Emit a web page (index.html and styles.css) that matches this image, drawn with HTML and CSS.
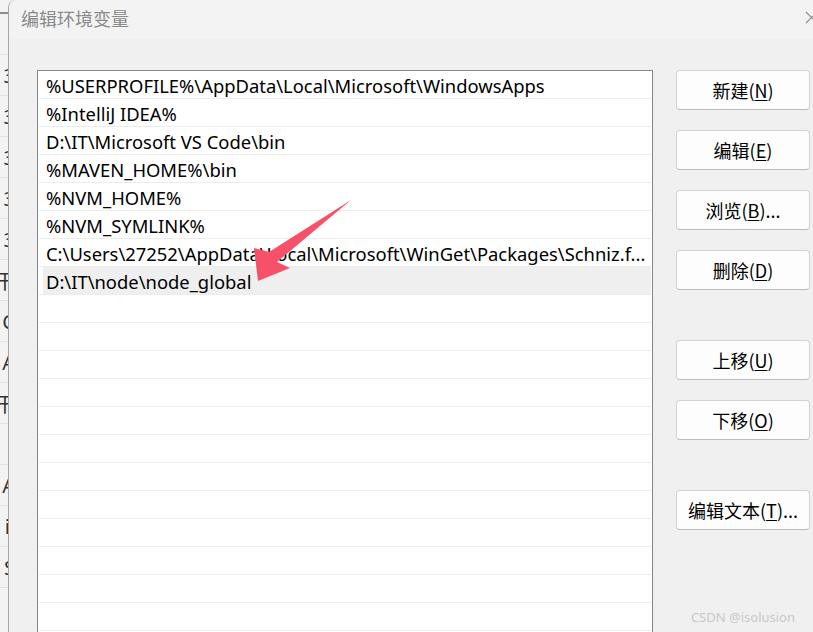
FILE: index.html
```html
<!DOCTYPE html>
<html lang="zh-CN">
  <head>
    <meta charset="UTF-8" />
    <title>编辑环境变量</title>
    <link rel="stylesheet" href="styles.css">
  </head>
  <body>
    <div class="screen">
      <div class="behind">
        <div class="behind-bar"></div>
        <div class="behind-row"></div>
        <div class="behind-row"><span>3</span></div>
        <div class="behind-row"><span>3</span></div>
        <div class="behind-row"><span>3</span></div>
        <div class="behind-row"><span>3</span></div>
        <div class="behind-row"><span>3</span></div>
        <div class="behind-row"><span>干</span></div>
        <div class="behind-row"><span>C</span></div>
        <div class="behind-row"><span>A</span></div>
        <div class="behind-row"><span>干</span></div>
        <div class="behind-row"></div>
        <div class="behind-row"><span>A</span></div>
        <div class="behind-row"><span>il</span></div>
        <div class="behind-row"><span>S</span></div>
      </div>

      <div class="dialog">
        <div class="titlebar">
          <span class="title">编辑环境变量</span>
          <span class="close">
            <svg width="13" height="13" viewBox="0 0 13 13">
              <path d="M1 1 L12 12 M12 1 L1 12" stroke="#8a8a8a" stroke-width="1.1" fill="none" />
            </svg>
          </span>
        </div>

        <div class="content">
          <div class="pathlist">
            <div class="row">%USERPROFILE%\AppData\Local\Microsoft\WindowsApps</div>
            <div class="row">%IntelliJ IDEA%</div>
            <div class="row">D:\IT\Microsoft VS Code\bin</div>
            <div class="row">%MAVEN_HOME%\bin</div>
            <div class="row">%NVM_HOME%</div>
            <div class="row">%NVM_SYMLINK%</div>
            <div class="row">C:\Users\27252\AppData\Local\Microsoft\WinGet\Packages\Schniz.f...</div>
            <div class="row selected">D:\IT\node\node_global</div>
            <div class="row"></div>
            <div class="row"></div>
            <div class="row"></div>
            <div class="row"></div>
            <div class="row"></div>
            <div class="row"></div>
            <div class="row"></div>
            <div class="row"></div>
            <div class="row"></div>
            <div class="row"></div>
            <div class="row"></div>
            <div class="row"></div>
          </div>

          <div class="actions">
            <div class="group">
              <button class="btn">新建(<u>N</u>)</button>
              <button class="btn">编辑(<u>E</u>)</button>
              <button class="btn">浏览(<u>B</u>)...</button>
              <button class="btn">删除(<u>D</u>)</button>
            </div>
            <div class="group">
              <button class="btn">上移(<u>U</u>)</button>
              <button class="btn">下移(<u>O</u>)</button>
            </div>
            <div class="group">
              <button class="btn">编辑文本(<u>T</u>)...</button>
            </div>
          </div>
        </div>
      </div>

      <svg class="arrow" width="110" height="90" viewBox="245 195 110 90">
        <path d="M351 200 L269 252 L254 248 L258 281 L290 268 L277 262 Z" fill="#f7516a" />
      </svg>

      <div class="watermark">CSDN @isolusion</div>
    </div>
  </body>
</html>
```

FILE: styles.css
```css
* {
  box-sizing: border-box;
}

html,
body {
  margin: 0;
  padding: 0;
  overflow: hidden;
}

body {
  font-family: "Noto Sans", "Noto Sans CJK SC", sans-serif;
  color: #000;
  background: #f0f0f0;
}

.screen {
  position: relative;
  display: flex;
  width: 813px;
  height: 632px;
  overflow: hidden;
}

/* window behind the dialog, only a sliver shows */
.behind {
  width: 8px;
  flex: none;
  background: #f3f3f3;
  display: flex;
  flex-direction: column;
  overflow: hidden;
}

.behind-bar {
  height: 14px;
  border-bottom: 2px solid #8c8c8c;
}

.behind-row {
  height: 41px;
  border-bottom: 1px solid #e2e2e2;
  display: flex;
  justify-content: flex-end;
  align-items: center;
  font-size: 20px;
  color: #333;
}

.behind-row span {
  margin-right: -7px;
}

.dialog {
  flex: 1;
  display: flex;
  flex-direction: column;
  border-left: 1px solid #a6a6a6;
  border-top-left-radius: 8px;
  background: #f0f0f0;
  min-width: 0;
}

.titlebar {
  height: 39px;
  flex: none;
  background: #f3f3f3;
  border-top-left-radius: 8px;
  display: flex;
  align-items: center;
  justify-content: space-between;
  padding-left: 12px;
}

.title {
  font-size: 18px;
  color: #8a8a8a;
  font-family: "Noto Sans CJK SC", sans-serif;
  margin-top: -3px;
}

.close {
  display: flex;
  margin-right: -5px;
  margin-top: -5px;
}

.content {
  flex: 1;
  display: flex;
  padding: 31px 2px 0 28px;
  min-height: 0;
}

.pathlist {
  width: 616px;
  flex: none;
  background: #fff;
  border: 1px solid #84878d;
  border-bottom: none;
  padding: 0 1px;
  overflow: hidden;
}

.row {
  height: 28px;
  line-height: 29px;
  border-bottom: 1px solid #ececec;
  padding: 0 7px;
  font-size: 18.4px;
  white-space: nowrap;
  overflow: hidden;
}

.row.selected {
  background: linear-gradient(to right, transparent 4px, #efefef 4px);
}

.actions {
  margin-left: 23px;
  flex: 1;
  display: flex;
  flex-direction: column;
  gap: 50px;
}

.group {
  display: flex;
  flex-direction: column;
  gap: 20px;
}

.btn {
  height: 40px;
  width: 134px;
  background: #fdfdfd;
  border: 1px solid #d2d2d2;
  border-bottom-color: #bcbcbc;
  border-radius: 4px;
  font-family: "Noto Sans CJK SC", sans-serif;
  font-size: 18px;
  color: #000;
  padding: 0;
}

.btn u {
  text-underline-offset: 2px;
}

.arrow {
  position: absolute;
  left: 245px;
  top: 195px;
}

.watermark {
  position: absolute;
  right: 18px;
  bottom: 6px;
  font-family: "Noto Sans", sans-serif;
  font-size: 13px;
  color: #c8c8c8;
}
```
